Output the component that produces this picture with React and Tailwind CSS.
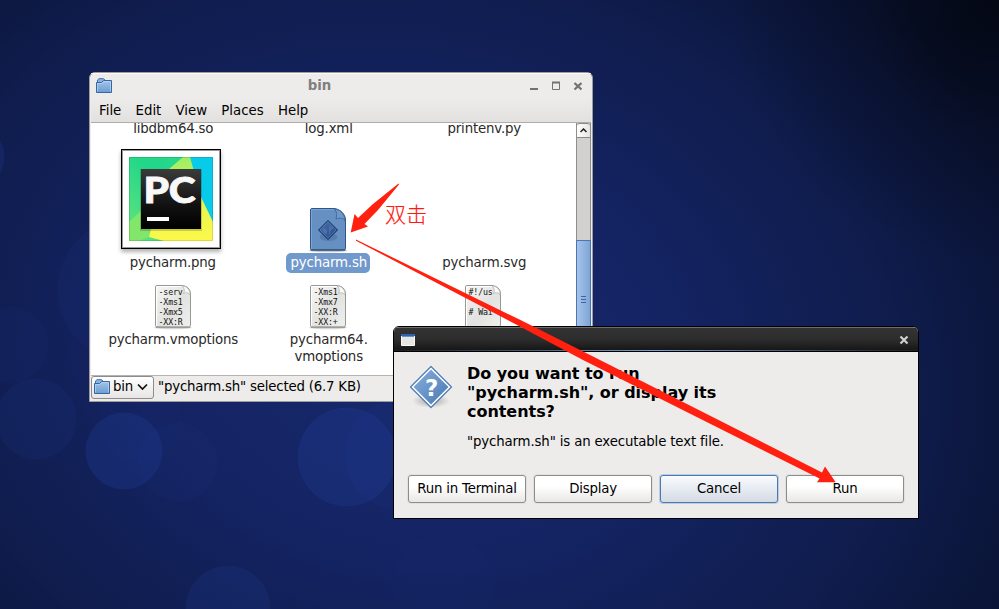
import React from "react";

const bubbles = [
  [347, 457, 49, 0.22],
  [124, 451, 38, 0.24],
  [178, 462, 39, 0.06],
  [36, 419, 40, 0.1],
  [140, 420, 42, 0.04],
  [228, 608, 42, 0.16],
  [10, 345, 38, 0.05],
  [-30, 157, 34, 0.2],
  [130, 290, 72, 0.08],
  [400, 455, 55, 0.08],
  [443, 585, 50, 0.03],
];

function Wallpaper() {
  return (
    <svg className="absolute inset-0" width="999" height="609" viewBox="0 0 999 609">
      <defs>
        <radialGradient id="sky" gradientUnits="userSpaceOnUse" cx="0" cy="0" r="1" gradientTransform="translate(410 350) rotate(12) scale(690 540)">
          <stop offset="0" stopColor="#172a6e" />
          <stop offset="0.4" stopColor="#142362" />
          <stop offset="0.72" stopColor="#0f1c4c" />
          <stop offset="1" stopColor="#091230" />
        </radialGradient>
        <radialGradient id="corner" gradientUnits="userSpaceOnUse" cx="999" cy="0" r="270">
          <stop offset="0" stopColor="#02040a" stopOpacity="0.75" />
          <stop offset="0.5" stopColor="#02040a" stopOpacity="0.25" />
          <stop offset="1" stopColor="#02040a" stopOpacity="0" />
        </radialGradient>
      </defs>
      <rect width="999" height="609" fill="url(#sky)" />
      <rect width="999" height="609" fill="url(#corner)" />
      {bubbles.map(([x, y, r, o], i) => (
        <circle key={i} cx={x} cy={y} r={r} fill="#2546a8" stroke="#3459c4" strokeOpacity="0.5" opacity={o} />
      ))}
    </svg>
  );
}

function FolderIcon() {
  return (
    <svg width="17" height="16" viewBox="0 0 17 16" className="shrink-0">
      <defs>
        <linearGradient id="fold" x1="0" y1="0" x2="0" y2="1">
          <stop offset="0" stopColor="#a3c4e8" />
          <stop offset="1" stopColor="#6c9dd2" />
        </linearGradient>
      </defs>
      <path d="M1.500 6V2L3 .7H7.500L9 2V6Z" fill="#8db4e0" stroke="#3f6fae" />
      <path d="M.5 4.500H5.500L7.500 2.500H15.500V14.500H.5Z" fill="url(#fold)" stroke="#3465a4" />
      <path d="M1.500 13.500V5.500H6L8 3.500H14.500V13.500" fill="none" stroke="#bcd6f2" strokeOpacity=".7" />
    </svg>
  );
}

function PageIcon({ lines }) {
  return (
    <svg width="40" height="45" viewBox="0 0 40 45" className="block">
      <defs>
        <linearGradient id="page" x1="0" y1="0" x2="1" y2="1">
          <stop offset="0" stopColor="#f7f7f6" />
          <stop offset=".55" stopColor="#e2e3e0" />
          <stop offset="1" stopColor="#f0f0ef" />
        </linearGradient>
      </defs>
      <ellipse cx="20" cy="42.5" rx="19" ry="1.8" fill="#000" opacity=".16" />
      <path d="M4 .5H29C34 1 37.500 4 37.500 9V40Q37.500 42 35.500 42H4Q2.500 42 2.500 40V2Q2.500 .5 4 .5Z" fill="url(#page)" stroke="#969893" />
      <path d="M3.500 41V1.500H29" fill="none" stroke="#fff" />
      <g fontFamily="DejaVu Sans Mono, monospace" fontSize="8.3" fill="#111">
        {lines.map((l, i) => (
          <text key={i} x="5.500" y={10 + i * 10}>{l}</text>
        ))}
      </g>
      <path d="M29 1C32 3 31.500 7 30.500 8.500C33.500 7 36 8 37 10C37.500 5 34 1 29 1Z" fill="#fbfbfa" stroke="#aaaca7" strokeWidth=".7" />
      <path d="M3 42.200H37" stroke="#858782" strokeWidth=".8" />
    </svg>
  );
}

function ScriptIcon() {
  return (
    <svg width="40" height="45" viewBox="0 0 40 45" className="block">
      <defs>
        <linearGradient id="gem" x1="0" y1="0" x2="1" y2="1">
          <stop offset="0" stopColor="#4a72a8" />
          <stop offset="1" stopColor="#27488a" />
        </linearGradient>
      </defs>
      <ellipse cx="20" cy="42.500" rx="19" ry="1.800" fill="#000" opacity=".22" />
      <path d="M4 .5H26C32 1 37.500 6 37.500 12V40Q37.500 42 35.500 42H4Q2.500 42 2.500 40V2Q2.500 .5 4 .5Z" fill="#6690c2" stroke="#2f5689" />
      <path d="M3.500 41V1.500H26" fill="none" stroke="#7ba4d3" />
      <path d="M26 1C29 3 29 7 28 11C32 9.500 36 10 37 13C37 6 32 1 26 1Z" fill="#6f99ca" stroke="#41699e" />
      <ellipse cx="20.500" cy="29" rx="9" ry="4" fill="#345b90" opacity=".35" />
      <path d="M20 12.500L29.500 22L20 31.500L10.500 22Z" fill="url(#gem)" stroke="#162e62" />
      <path d="M20 14L28 22L20 30L12 22Z" fill="none" stroke="#5c85b8" strokeWidth=".6" />
      <path d="M15 21C17 20 20 22 18 26L16 24Z M21 18L25 20L22 23L21 27" fill="#4f79b2" stroke="#5f8ac0" strokeWidth=".5" opacity=".7" />
      <path d="M2.500 42H37.500" stroke="#254975" />
    </svg>
  );
}

function PyCharmThumb() {
  return (
    <div className="h-[100px] w-[100px] border border-black bg-white p-[7px] shadow-[inset_0_0_0_1px_#999,0_3px_4px_rgba(0,0,0,.3)]">
      <svg width="84" height="84" viewBox="0 0 84 84">
        <defs>
          <linearGradient id="green" x1="1" y1="0" x2="0" y2="1">
            <stop offset="0" stopColor="#2bd98c" />
            <stop offset=".45" stopColor="#21d789" />
            <stop offset="1" stopColor="#68e47c" />
          </linearGradient>
          <linearGradient id="yellow" x1="0" y1="0" x2="0" y2="1">
            <stop offset="0" stopColor="#9aee65" />
            <stop offset=".5" stopColor="#e4f553" />
            <stop offset="1" stopColor="#fcf84a" />
          </linearGradient>
          <linearGradient id="black" x1="0" y1="0" x2="0" y2="1">
            <stop offset="0" stopColor="#3b3b3b" />
            <stop offset=".6" stopColor="#111" />
            <stop offset="1" stopColor="#000" />
          </linearGradient>
        </defs>
        <rect width="84" height="84" fill="url(#green)" />
        <path d="M61 0H84V66L72 41Z" fill="#08cbea" />
        <path d="M0 65L16 50V72H22L20 80L9 84H0Z" fill="#82e66b" />
        <path d="M54 0H61L72 40L84 65V84H35L20 80L23 68L40 12Z" fill="url(#yellow)" />
        <rect x=".5" y=".5" width="83" height="83" fill="none" stroke="#000" strokeOpacity=".12" />
        <rect x="11" y="12" width="62" height="62" fill="#000" opacity=".18" />
        <rect x="12" y="12" width="60" height="60" fill="url(#black)" />
        <text x="14.500" y="45.500" fontFamily="Lato, sans-serif" fontWeight="900" fontSize="36" fill="#f8f8f8" stroke="#f8f8f8" strokeWidth=".8" textLength="52" lengthAdjust="spacingAndGlyphs">PC</text>
        <rect x="18" y="60" width="22" height="4" fill="#fff" />
      </svg>
    </div>
  );
}

function File({ icon, label }) {
  return (
    <div className="flex flex-col items-center">
      {icon}
      <div className="pl-px text-center leading-[17px] whitespace-pre">{label}</div>
    </div>
  );
}

function FileWindow() {
  return (
    <div className="absolute top-[72px] left-[89px] flex h-[330px] w-[504px] flex-col rounded-t-[6px] border border-[#9d9c9a] bg-[#edeceb] pr-px pl-px text-[13.33px] tracking-[-0.18px] text-[#2a2a2a]">
      <div className="flex h-[25px] shrink-0 items-center border-t border-white/80 pr-[10px] pl-[5px]">
        <FolderIcon />
        <div className="flex-1 pr-[2px] text-center font-bold tracking-normal text-[#807f7e]">bin</div>
        <svg width="54" height="12" viewBox="0 0 54 12" fill="none" stroke="#73726f" className="mr-[-1px]">
          <path d="M2 9H10M24 2.500H32" strokeWidth="2" />
          <path d="M24.500 2.500H31.500V9.500H24.500Z" />
          <path d="M46.500 3L53.500 9.500M53.500 3L46.500 9.500" strokeWidth="2.300" />
        </svg>
      </div>
      <div className="flex h-[25px] shrink-0 items-center gap-[14.200px] border-b border-[#aeadab] bg-linear-to-b from-[#edeceb] to-[#e2e1df] pt-[2px] pl-[8px] tracking-normal text-black">
        <span>File</span>
        <span>Edit</span>
        <span>View</span>
        <span>Places</span>
        <span>Help</span>
      </div>
      <div className="flex h-[252px] shrink-0 bg-white">
        <div className="flex-1 overflow-hidden pl-[4px]">
          <div className="grid h-[27px] -translate-y-[3px] grid-cols-[155.5px_155.5px_155.5px]">
            <File label="libdbm64.so" />
            <File label="log.xml" />
            <File label="printenv.py" />
          </div>
          <div className="-mt-px grid h-[124px] grid-cols-[155.5px_155.5px_155.5px] items-end">
            <div className="flex flex-col items-center gap-[4px] pr-[4px]">
              <PyCharmThumb />
              <span className="h-5 pl-[4px] leading-[19px]">pycharm.png</span>
            </div>
            <div className="flex flex-col items-center">
              <ScriptIcon />
              <span className="h-5 w-[84px] rounded-[5px] bg-[#7199cb] pl-px text-center leading-[19px] text-white">pycharm.sh</span>
            </div>
            <span className="h-5 pl-px text-center leading-[19px]">pycharm.svg</span>
          </div>
          <div className="grid grid-cols-[155.5px_155.5px_154px] pt-[12px] leading-[17px]">
            <File icon={<div className="pb-px"><PageIcon lines={["-serv", "-Xms1", "-Xmx5", "-XX:R"]} /></div>} label="pycharm.vmoptions" />
            <File icon={<div className="pb-px"><PageIcon lines={["-Xms1", "-Xmx7", "-XX:R", "-XX:+"]} /></div>} label={"pycharm64.\nvmoptions"} />
            <File icon={<PageIcon lines={["#!/us", "", "# Wai", ""]} />} label="" />
          </div>
        </div>
        <div className="flex w-[15px] flex-col border-x border-[#918f8d] bg-[#d3d1cf]">
          <div className="flex h-[15px] items-center justify-center rounded-t-[3px] border-y border-[#8b8987] bg-linear-to-r from-white to-[#e6e5e4]">
            <svg width="7" height="5" viewBox="0 0 7 5" fill="none" stroke="#222" strokeWidth="1.500"><path d="M.5 4L3.500 1L6.500 4" /></svg>
          </div>
          <div className="h-[102px]" />
          <div className="mx-[-1px] flex flex-1 flex-col items-center gap-[2px] border border-[#4a76b2] bg-linear-to-r from-[#a6c4ea] to-[#7fa5d8] pt-[55px]">
            <i className="h-px w-[5px] bg-[#3b659f]" />
            <i className="h-px w-[5px] bg-[#3b659f]" />
            <i className="h-px w-[5px] bg-[#3b659f]" />
          </div>
        </div>
      </div>
      <div className="flex flex-1 items-center border-t border-[#b5b4b2] text-black">
        <div className="-mt-[3px] flex h-[23px] w-[63px] items-center rounded-[3px] border border-[#8e8c89] bg-linear-to-b from-white to-[#e7e6e4] pl-[2px]">
          <FolderIcon />
          <span className="pl-[2px]">bin</span>
          <svg width="11" height="8" viewBox="0 0 11 8" fill="none" stroke="#111" strokeWidth="1.700" className="ml-[4px]"><path d="M1 1.500L5.500 6L10 1.500" /></svg>
        </div>
        <span className="-mt-[4px] pl-[4px] tracking-[-0.2px] whitespace-pre">"pycharm.sh" selected (6.7 KB)</span>
      </div>
    </div>
  );
}

function QuestionIcon() {
  return (
    <svg width="44" height="46" viewBox="0 0 44 46" className="mt-px shrink-0">
      <defs>
        <linearGradient id="q" x1="0" y1="0" x2="1" y2="1">
          <stop offset="0" stopColor="#8ab0dc" />
          <stop offset="1" stopColor="#4678b4" />
        </linearGradient>
        <radialGradient id="qs">
          <stop offset="0" stopColor="#000" stopOpacity=".3" />
          <stop offset="1" stopColor="#000" stopOpacity="0" />
        </radialGradient>
      </defs>
      <ellipse cx="22" cy="36" rx="19" ry="7" fill="url(#qs)" />
      <path d="M22 1.500L42.500 22L22 42.500L1.500 22Z" fill="#fff" stroke="#4a7ab5" strokeWidth="1.200" strokeLinejoin="round" />
      <path d="M22 4.500L39.500 22L22 39.500L4.500 22Z" fill="url(#q)" strokeLinejoin="round" />
      <text x="22.500" y="30.500" textAnchor="middle" fontFamily="DejaVu Sans, sans-serif" fontWeight="700" fontSize="23" fill="#fff">?</text>
    </svg>
  );
}

function Button({ children, focused }) {
  return (
    <div
      className={
        focused
          ? "flex h-[28px] w-[118px] items-center justify-center rounded-[3px] border border-[#4f78ab] bg-linear-to-b from-[#f8fbff] to-[#d5dbe4] pb-px shadow-[0_0_0_1px_#b9cde6]"
          : "flex h-[28px] w-[118px] items-center justify-center rounded-[3px] border border-[#8e8c89] bg-linear-to-b from-white from-40% to-[#e8e7e5] pb-px shadow-[0_0_0_1px_#e2e1df]"
      }
    >
      {children}
    </div>
  );
}

function Dialog() {
  return (
    <div className="absolute top-[326px] left-[393px] flex h-[193px] w-[526px] flex-col overflow-hidden rounded-t-[6px] border border-black bg-[#edeceb] text-[13.33px] tracking-[-0.2px] text-black">
      <div className="flex h-[25px] shrink-0 items-center justify-between border-t border-b border-t-[#6d6d6d] border-b-black bg-linear-to-b from-[#333] via-[#2d2d2d] to-[#151515] pr-[9px] pl-[7px]">
        <svg width="14" height="12" viewBox="0 0 14 12">
          <path d="M.5 .5H13.500V11.500H.5Z" fill="#e6e6e3" stroke="#fafafa" />
          <path d="M0 0H14V2H0Z" fill="#2f62ad" />
          <path d="M1 2.500H13" stroke="#6791ca" />
        </svg>
        <svg width="10" height="10" viewBox="0 0 10 10" stroke="#d0d0d0" strokeWidth="2.200"><path d="M1.500 1.500L8.500 8.500M8.500 1.500L1.500 8.500" /></svg>
      </div>
      <div className="-mt-[2px] h-px shrink-0 bg-linear-to-r from-[#202020] via-[#7ba0d4] to-[#202020]" />
      <div className="h-px shrink-0 bg-black" />
      <div className="flex h-[123px] shrink-0 gap-[14px] pt-[12px] pl-[15px]">
        <QuestionIcon />
        <div>
          <div className="text-[16px] leading-[19px] font-bold tracking-[-0.04px] whitespace-pre">{'Do you want to run\n"pycharm.sh", or display its\ncontents?'}</div>
          <div className="pt-[12px] leading-[17px] tracking-[-0.15px]">"pycharm.sh" is an executable text file.</div>
        </div>
      </div>
      <div className="flex gap-[8px] pl-[14px]">
        <Button>Run in Terminal</Button>
        <Button>Display</Button>
        <Button focused>Cancel</Button>
        <Button>Run</Button>
      </div>
    </div>
  );
}

function Annotations() {
  return (
    <div className="absolute inset-0">
      <svg width="999" height="609" viewBox="0 0 999 609" fill="#ff2010">
        <path d="M398.500 183.500L399 184.500L378 210L364.500 224L368 226.500L350.700 232.500L354.500 214L358 218L373 204Z" />
        <path d="M356 239.500L520 319.800L600 360L822 472.500L825 466.500L835.700 482.300L817 482.300L819.500 478.500L583 360L518 325.500L356 240.700Z" />
      </svg>
      <div className="absolute top-[200px] left-[385px] font-['Noto_Sans_CJK_SC',sans-serif] text-[21px] leading-[26px] font-light text-[#ff1a10] [-webkit-text-stroke:.2px_#ff1a10]">双击</div>
    </div>
  );
}

export default function App() {
  return (
    <div className="relative h-[609px] w-[999px] overflow-hidden bg-[#101c4c] font-['DejaVu_Sans',sans-serif]">
      <Wallpaper />
      <FileWindow />
      <Dialog />
      <Annotations />
    </div>
  );
}
